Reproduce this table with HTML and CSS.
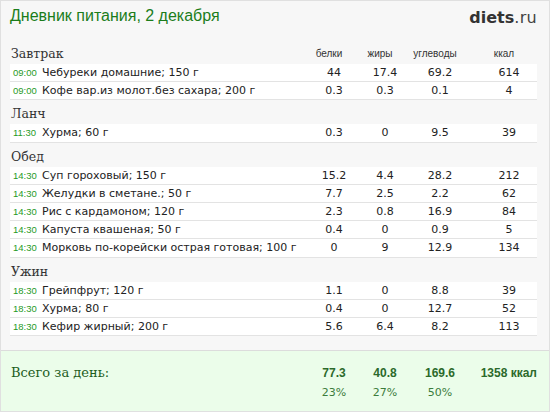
FILE: index.html
```html
<!DOCTYPE html>
<html lang="ru">
<head>
<meta charset="utf-8">
<title>Дневник питания</title>
<link rel="stylesheet" href="styles.css">
</head>
<body>
<div class="page">
  <header class="top">
    <h1 class="title">Дневник питания, 2 декабря</h1>
    <div class="logo"><b>diets</b>.ru</div>
  </header>

  <main class="diary">
    <section class="meal">
      <div class="meal-head">
        <h2>Завтрак</h2>
        <span class="col">белки</span><span class="col">жиры</span><span class="col">углеводы</span><span class="col col-k">ккал</span>
      </div>
      <div class="row"><span class="time">09:00</span><span class="name">Чебуреки домашние; 150 г</span><span class="num">44</span><span class="num">17.4</span><span class="num">69.2</span><span class="num k">614</span></div>
      <div class="row"><span class="time">09:00</span><span class="name">Кофе вар.из молот.без сахара; 200 г</span><span class="num">0.3</span><span class="num">0.3</span><span class="num">0.1</span><span class="num k">4</span></div>
    </section>

    <section class="meal">
      <div class="meal-head"><h2>Ланч</h2></div>
      <div class="row"><span class="time">11:30</span><span class="name">Хурма; 60 г</span><span class="num">0.3</span><span class="num">0</span><span class="num">9.5</span><span class="num k">39</span></div>
    </section>

    <section class="meal">
      <div class="meal-head"><h2>Обед</h2></div>
      <div class="row"><span class="time">14:30</span><span class="name">Суп гороховый; 150 г</span><span class="num">15.2</span><span class="num">4.4</span><span class="num">28.2</span><span class="num k">212</span></div>
      <div class="row"><span class="time">14:30</span><span class="name">Желудки в сметане.; 50 г</span><span class="num">7.7</span><span class="num">2.5</span><span class="num">2.2</span><span class="num k">62</span></div>
      <div class="row"><span class="time">14:30</span><span class="name">Рис с кардамоном; 120 г</span><span class="num">2.3</span><span class="num">0.8</span><span class="num">16.9</span><span class="num k">84</span></div>
      <div class="row"><span class="time">14:30</span><span class="name">Капуста квашеная; 50 г</span><span class="num">0.4</span><span class="num">0</span><span class="num">0.9</span><span class="num k">5</span></div>
      <div class="row"><span class="time">14:30</span><span class="name">Морковь по-корейски острая готовая; 100 г</span><span class="num">0</span><span class="num">9</span><span class="num">12.9</span><span class="num k">134</span></div>
    </section>

    <section class="meal">
      <div class="meal-head"><h2>Ужин</h2></div>
      <div class="row"><span class="time">18:30</span><span class="name">Грейпфрут; 120 г</span><span class="num">1.1</span><span class="num">0</span><span class="num">8.8</span><span class="num k">39</span></div>
      <div class="row"><span class="time">18:30</span><span class="name">Хурма; 80 г</span><span class="num">0.4</span><span class="num">0</span><span class="num">12.7</span><span class="num k">52</span></div>
      <div class="row"><span class="time">18:30</span><span class="name">Кефир жирный; 200 г</span><span class="num">5.6</span><span class="num">6.4</span><span class="num">8.2</span><span class="num k">113</span></div>
    </section>
  </main>

  <footer class="total">
    <div class="total-label">Всего за день:</div>
    <div class="tv">77.3</div>
    <div class="tv">40.8</div>
    <div class="tv">169.6</div>
    <div class="tv tv-k">1358 ккал</div>
    <div class="pct p1">23%</div>
    <div class="pct">27%</div>
    <div class="pct">50%</div>
  </footer>
</div>
</body>
</html>
```

FILE: styles.css
```css
html, body {
  margin: 0;
  padding: 0;
  background: #f7f7f7;
}

.page {
  box-sizing: border-box;
  width: 550px;
  height: 412px;
  border: 1px solid #e0e0e0;
  background: #f7f7f7;
  display: flex;
  flex-direction: column;
  overflow: hidden;
}

/* header */
.top {
  box-sizing: border-box;
  height: 39px;
  flex: none;
  display: flex;
  justify-content: space-between;
  align-items: flex-start;
  padding: 5px 12px 0 9px;
}

.title {
  margin: 0;
  font-family: "Liberation Sans", Arial, sans-serif;
  font-weight: normal;
  font-size: 16px;
  line-height: 19px;
  color: #1b7d1b;
}

.logo {
  font-family: "DejaVu Sans", sans-serif;
  font-size: 16px;
  line-height: 20px;
  margin-top: 2px;
  color: #444;
  letter-spacing: 0.3px;
}

.logo b {
  color: #333;
  font-weight: bold;
  letter-spacing: 0;
}

/* diary */
.diary {
  flex: 1;
  padding: 0 12px 0 9px;
}

.meal-head {
  box-sizing: border-box;
  height: 24px;
  display: grid;
  grid-template-columns: 1fr 48px 54px 56px 69px;
  align-items: end;
  padding: 0 5px 2px 1px;
}

.meal-head h2 {
  margin: 0;
  font-family: "DejaVu Serif", serif;
  font-weight: normal;
  font-size: 12.5px;
  line-height: 16px;
  color: #333;
}

.col {
  font-family: "Liberation Sans", Arial, sans-serif;
  font-size: 10px;
  line-height: 16px;
  color: #333;
  text-align: center;
}

.col-k {
  padding-left: 13px;
}

.row {
  box-sizing: border-box;
  height: 18.2px;
  display: grid;
  grid-template-columns: 29px 1fr 48px 54px 56px 69px;
  align-items: center;
  padding-left: 3px;
  background: #fff;
  border-bottom: 1px solid #e3e3e3;
  font-family: "DejaVu Sans", sans-serif;
  font-size: 11px;
  line-height: 17px;
  color: #222;
}

.time {
  font-family: "Liberation Sans", Arial, sans-serif;
  font-size: 9.5px;
  color: #1f9a1f;
}

.name {
  white-space: nowrap;
}

.num {
  text-align: center;
}

.num.k {
  padding-left: 13px;
}

/* total */
.total {
  box-sizing: border-box;
  height: 61px;
  flex: none;
  border-top: 1px solid #dcdcdc;
  background: #ebfdea;
  display: grid;
  grid-template-columns: 1fr 48px 54px 56px 69px;
  grid-template-rows: 16px 16px;
  row-gap: 4px;
  align-content: start;
  padding: 14px 12px 0 10px;
}

.total-label {
  font-family: "DejaVu Serif", serif;
  font-size: 13px;
  line-height: 16px;
  color: #1d5e1d;
}

.tv {
  font-family: "Liberation Sans", Arial, sans-serif;
  font-weight: bold;
  font-size: 12px;
  line-height: 16px;
  color: #2b6a2b;
  text-align: center;
}

.tv-k {
  text-align: right;
  white-space: nowrap;
}

.pct {
  font-family: "DejaVu Sans", sans-serif;
  font-size: 11px;
  line-height: 16px;
  color: #3c7c3c;
  text-align: center;
}

.p1 {
  grid-column: 2;
}
```
